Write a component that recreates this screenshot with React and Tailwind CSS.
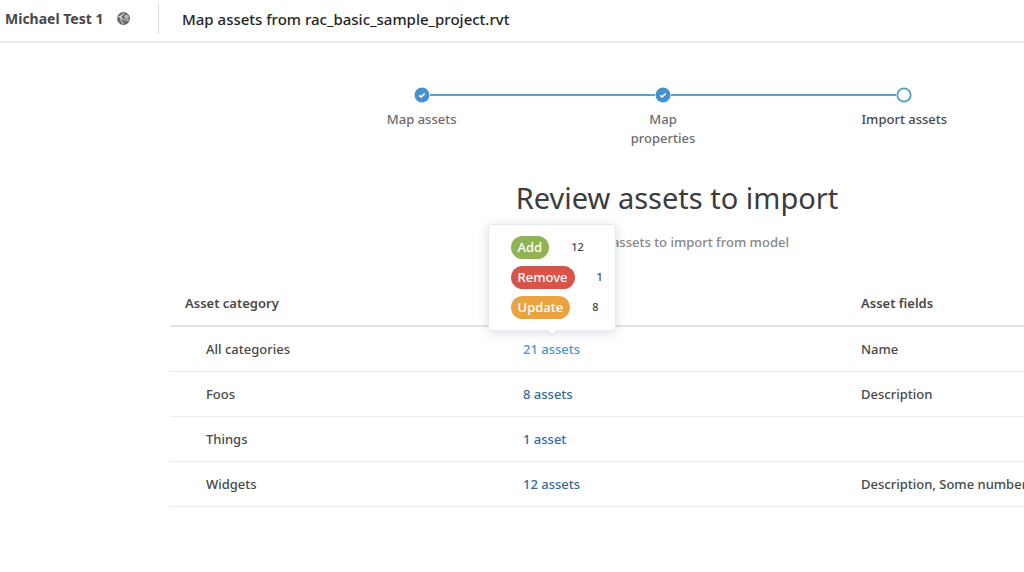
const steps = [
  { label: "Map assets", done: true },
  { label: "Map properties", done: true },
  { label: "Import assets", done: false },
];

const rows = [
  { category: "All categories", count: "21 assets", fields: "Name", open: true },
  { category: "Foos", count: "8 assets", fields: "Description" },
  { category: "Things", count: "1 asset", fields: "" },
  { category: "Widgets", count: "12 assets", fields: "Description, Some number" },
];

const changes = [
  { label: "Add", count: 12, color: "bg-[#92b353]" },
  { label: "Remove", count: 1, color: "bg-[#d95448]" },
  { label: "Update", count: 8, color: "bg-[#eaa43f]" },
];

const GlobeIcon = () => (
  <svg viewBox="0 0 24 24" className="size-[13px] shrink-0" aria-hidden="true">
    <circle cx="12" cy="12" r="12" fill="#666" />
    <path d="M1 10c5-1 9-3 12-8M7 8c2 5 7 8 15 7M7 9c-1 5 1 9 5 13" fill="none" stroke="#d4d4d4" strokeWidth="2" />
    <path d="M13 7l5-3 4 5-2 4-5-1z" fill="#b8b8b8" />
  </svg>
);

const StepMark = ({ done }) => (
  <svg viewBox="0 0 16 16" className="size-4 shrink-0" aria-hidden="true">
    {done ? (
      <>
        <circle cx="8" cy="8" r="7.5" fill="#4493cf" />
        <path d="M5.2 8.3l1.9 1.6 3.6-3.4" fill="none" stroke="#fff" strokeWidth="1.6" />
      </>
    ) : (
      <circle cx="8" cy="8" r="6.7" fill="#fff" stroke="#4f9acd" strokeWidth="1.8" />
    )}
  </svg>
);

const Stepper = () => (
  <ol className="flex w-[724px] ml-[131px]">
    {steps.map((step, i) => (
      <li key={step.label} className="flex-1 flex flex-col items-center">
        <div className="flex items-center w-full">
          <span className={`flex-1 h-0.5 ${i > 0 ? "bg-[#5b9fd1]" : ""}`} />
          <StepMark done={step.done} />
          <span className={`flex-1 h-0.5 ${i < steps.length - 1 ? "bg-[#5b9fd1]" : ""}`} />
        </div>
        <span className={`mt-[7px] w-[90px] text-center leading-[19px] ${step.done ? "text-[#6c6c6c]" : "text-[#484848]"}`}>
          {step.label}
        </span>
      </li>
    ))}
  </ol>
);

const ChangesPopover = () => (
  <div
    role="tooltip"
    className="absolute bottom-full left-1/2 -translate-x-1/2 mb-2 w-32 py-[11px] pl-[22px] flex flex-col gap-[7px] rounded bg-white border border-[#e6e9ee] shadow-[0_2px_12px_rgba(60,80,110,0.18)]"
  >
    {changes.map((c) => (
      <div key={c.label} className="flex items-center gap-[22px]">
        <span className={`rounded-full px-[7px] leading-[23px] text-white ${c.color}`}>{c.label}</span>
        <span className="text-[11px] leading-4">{c.count}</span>
      </div>
    ))}
    <span className="absolute -bottom-1 left-1/2 -translate-x-1/2 size-2 rotate-45 bg-white border-r border-b border-[#e0e4ea]" />
  </div>
);

const AssetTable = () => (
  <table className="w-full table-fixed border-collapse">
    <thead>
      <tr className="h-[46px] text-left border-b-2 border-[#e2e2e2]">
        <th className="px-[15px] font-semibold">Asset category</th>
        <th className="px-[15px] font-semibold">Assets</th>
        <th className="px-[15px] font-semibold">Asset fields</th>
      </tr>
    </thead>
    <tbody>
      {rows.map((row) => (
        <tr key={row.category} className="h-[45px] border-b border-[#ececec]">
          <td className="pl-9">{row.category}</td>
          <td className="px-[15px]">
            <span className="relative inline-block">
              <a href="#" className={row.open ? "text-[#4a95cd]" : "text-[#35699b]"}>
                {row.count}
              </a>
              {row.open && <ChangesPopover />}
            </span>
          </td>
          <td className="px-[15px] whitespace-nowrap">{row.fields}</td>
        </tr>
      ))}
    </tbody>
  </table>
);

const App = () => (
  <div className="min-h-screen overflow-hidden bg-white text-[13px] leading-5 font-medium text-[#484848] font-['Noto_Sans',sans-serif]">
    <header className="flex items-center h-[43px] pb-1 pl-[5px] border-b-2 border-[#ececec]">
      <div className="flex items-center gap-[14px] w-[154px] h-[30px] border-r border-[#dcdcdc]">
        <span className="text-sm font-bold whitespace-nowrap">Michael Test 1</span>
        <GlobeIcon />
      </div>
      <p className="ml-[23px] text-[15px] text-[#242424]">Map assets from rac_basic_sample_project.rvt</p>
    </header>

    {/* the review panel runs past the right edge of the viewport */}
    <main className="ml-[170px] -mr-40 pt-11">
      <Stepper />
      <h1 className="mt-[30px] text-center text-[29px] leading-10 font-normal text-[#3c3c3c]">Review assets to import</h1>
      <p className="mt-[14px] mb-7 text-center text-[#868686]">Review assets to import from model</p>
      <AssetTable />
    </main>
  </div>
);

export default App;
